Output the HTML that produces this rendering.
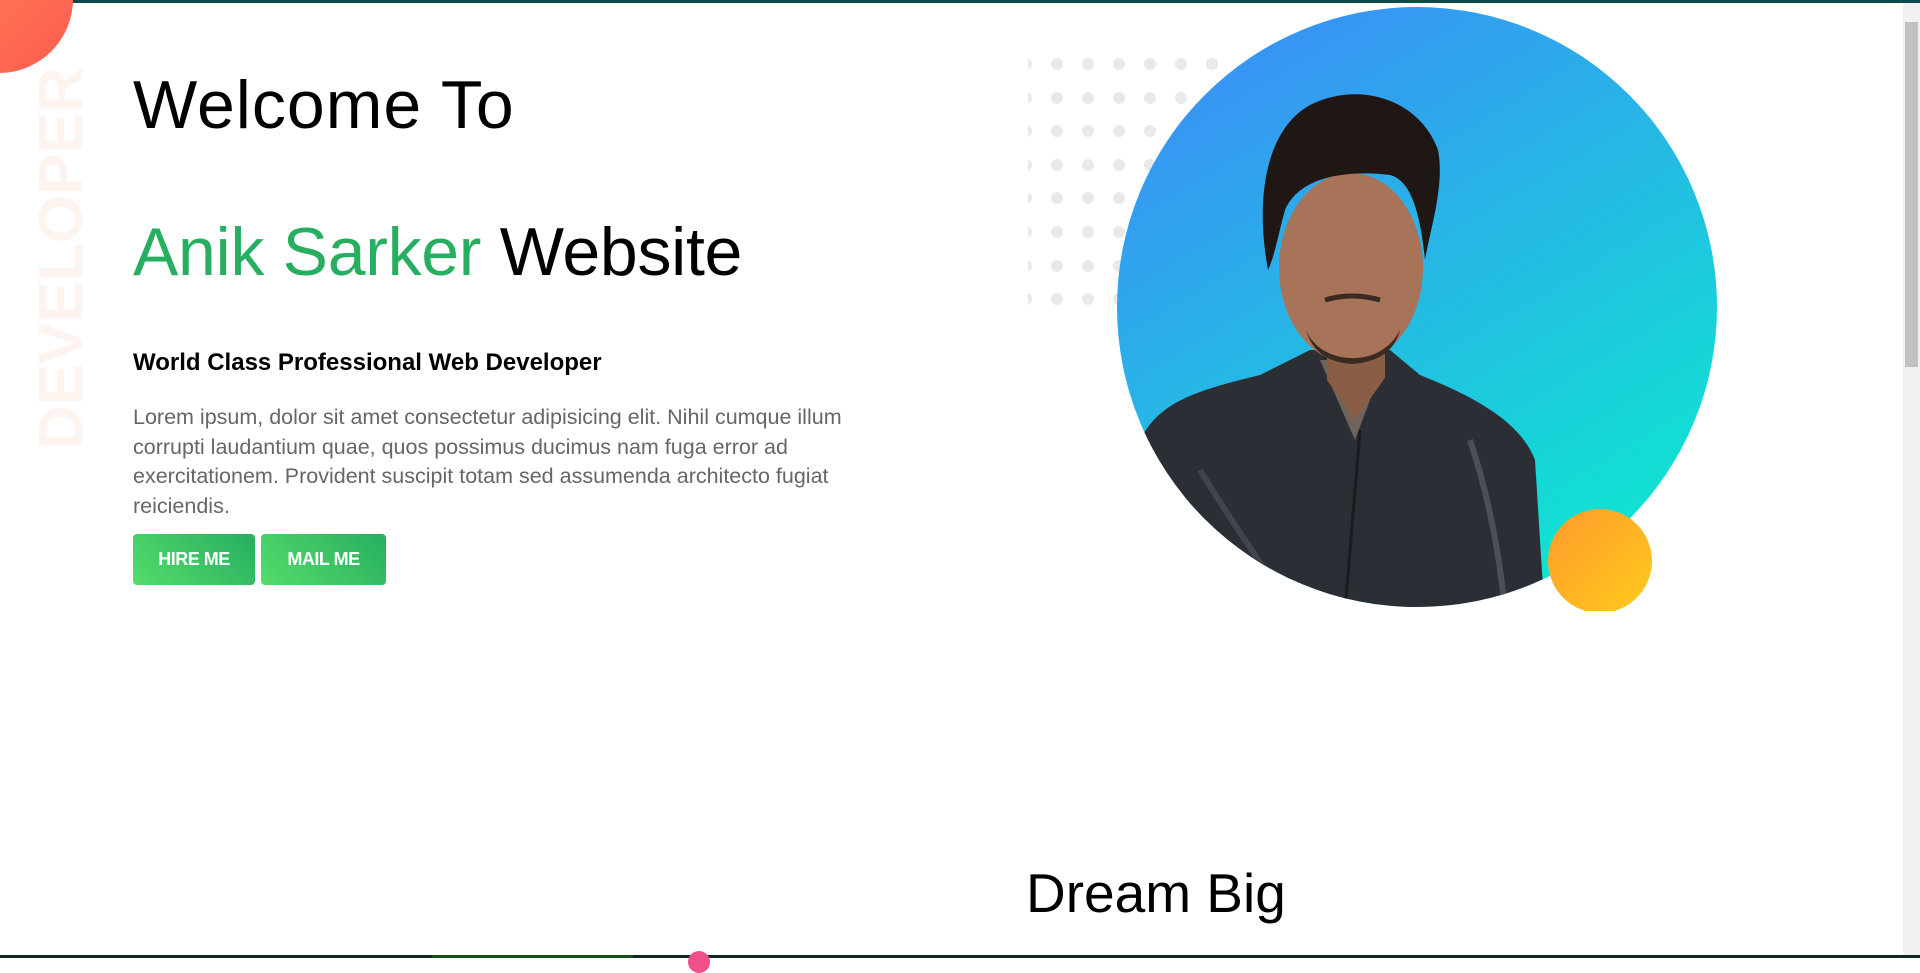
<!DOCTYPE html>
<html><head><meta charset="utf-8"><style>
html,body{margin:0;padding:0;width:1920px;height:958px;overflow:hidden;background:#fff;font-family:"Liberation Sans",sans-serif;}
.abs{position:absolute;}
h1{position:absolute;margin:0;font-weight:400;font-size:68px;color:#000;white-space:nowrap;line-height:1;}
.g{color:#27ae60;}
.btn{position:absolute;top:534px;height:51px;border-radius:4px;background:linear-gradient(45deg,#55dc6a,#27ae60);color:#fff;font-weight:700;font-size:18px;line-height:51px;text-align:center;letter-spacing:-0.5px;}
</style></head><body>
<div class="abs" style="left:0;top:0;width:1920px;height:3px;background:#0f4a4a"></div>
<div class="abs" style="left:-75px;top:-75px;width:148px;height:148px;border-radius:50%;background:linear-gradient(135deg,#ff8a5c,#fe5a4e)"></div>
<div class="abs" style="left:36px;top:450px;transform-origin:0 0;transform:rotate(-90deg);font-size:62px;font-weight:700;color:#fdf4ef;white-space:nowrap;line-height:52px;">DEVELOPER</div>
<h1 style="left:133px;top:71px;letter-spacing:1px;">Welcome To</h1>
<h1 style="left:133px;top:218px;letter-spacing:-0.3px;"><span class="g">Anik Sarker</span> Website</h1>
<div class="abs" style="left:133px;top:349px;font-size:24px;font-weight:700;color:#000;">World Class Professional Web Developer</div>
<div class="abs" style="left:133px;top:403px;width:750px;font-size:21.5px;line-height:29.5px;color:#666;">Lorem ipsum, dolor sit amet consectetur adipisicing elit. Nihil cumque illum corrupti laudantium quae, quos possimus ducimus nam fuga error ad exercitationem. Provident suscipit totam sed assumenda architecto fugiat reiciendis.</div>
<div class="btn" style="left:133px;width:122px;">HIRE ME</div>
<div class="btn" style="left:261px;width:125px;">MAIL ME</div>
<div class="abs" style="left:1026px;top:866px;font-size:55px;color:#000;line-height:1;">Dream Big</div>
<svg class="abs" style="left:0;top:0" width="1920" height="958">
<defs>
<linearGradient id="bg" x1="0.2" y1="0" x2="0.8" y2="1"><stop offset="0" stop-color="#3b8ef7"/><stop offset="1" stop-color="#0de9cf"/></linearGradient>
<linearGradient id="og" x1="0" y1="0" x2="1" y2="1"><stop offset="0" stop-color="#ff9a2c"/><stop offset="1" stop-color="#ffcb1c"/></linearGradient>
<clipPath id="cc"><circle cx="1417" cy="307" r="300"/></clipPath>
<clipPath id="dc"><rect x="1028" y="0" width="500" height="400"/></clipPath>
</defs>
<g fill="#e9e9e9" clip-path="url(#dc)">
<g id="row">
<circle cx="1026" cy="64" r="6"/><circle cx="1057" cy="64" r="6"/><circle cx="1088" cy="64" r="6"/><circle cx="1119" cy="64" r="6"/><circle cx="1150" cy="64" r="6"/><circle cx="1181" cy="64" r="6"/><circle cx="1212" cy="64" r="6"/>
</g>
<use href="#row" y="34"/><use href="#row" y="67"/><use href="#row" y="101"/><use href="#row" y="134"/><use href="#row" y="168"/><use href="#row" y="202"/><use href="#row" y="235"/>
</g>
<circle cx="1417" cy="307" r="300" fill="url(#bg)"/>
<g clip-path="url(#cc)">
<path d="M1140 440 C1160 400 1200 390 1260 375 L1310 350 L1390 350 L1420 375 C1470 395 1520 420 1535 460 L1545 620 L1130 620 Z" fill="#2b2e35"/>
<path d="M1320 360 L1355 440 L1385 360 Z" fill="#6f645c"/>
<path d="M1327 345 L1327 380 L1355 420 L1385 378 L1385 340 Z" fill="#8a5d45"/>
<path d="M1200 470 C1230 520 1260 560 1290 610" stroke="#40444c" stroke-width="6" fill="none"/>
<path d="M1470 440 C1490 500 1500 560 1505 610" stroke="#4a4f58" stroke-width="6" fill="none"/>
<path d="M1360 430 L1345 610" stroke="#1a1c20" stroke-width="3"/>
</g>
<ellipse cx="1351" cy="268" rx="72" ry="95" fill="#a87459"/>
<path d="M1306 330 C1320 365 1380 370 1400 330 C1395 350 1380 362 1352 364 C1325 362 1312 350 1306 330 Z" fill="#3a2a22"/>
<path d="M1268 270 C1255 200 1265 130 1310 105 C1360 80 1420 100 1438 150 C1445 185 1430 230 1425 260 C1420 210 1410 180 1390 175 C1350 170 1300 175 1285 210 C1278 235 1275 255 1268 270 Z" fill="#1e1714"/>
<path d="M1325 300 Q1352 292 1380 300" stroke="#3a2a22" stroke-width="5" fill="none"/>
<circle cx="1600" cy="561" r="52" fill="url(#og)"/>
<rect x="1540" y="611" width="120" height="20" fill="#fff"/>
</svg>
<div class="abs" style="left:1903px;top:3px;width:17px;height:952px;background:#f1f1f1"></div>
<div class="abs" style="left:1905px;top:22px;width:13px;height:345px;background:#c1c1c1"></div>
<div class="abs" style="left:0;top:955px;width:1920px;height:3px;background:#10291f"></div>
<div class="abs" style="left:432px;top:955px;width:201px;height:3px;background:#1a4f1e"></div>
<div class="abs" style="left:688px;top:951px;width:22px;height:22px;border-radius:50%;background:#f0508a"></div>
</body></html>
